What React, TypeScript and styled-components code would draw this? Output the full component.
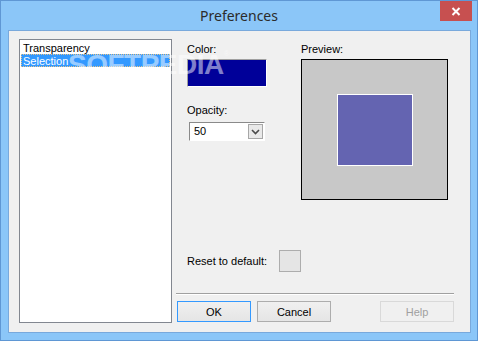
import React from "react";
import styled, { createGlobalStyle } from "styled-components";

const Global = createGlobalStyle`
  html, body { margin: 0; padding: 0; background: #ffffff; }
  body { font-family: "Liberation Sans", Arial, sans-serif; }
  * { box-sizing: border-box; }
`;

const Window = styled.div`
  position: relative;
  width: 478px;
  height: 341px;
  border: 1px solid #5f97d4;
  background: #8bc6f8;
  display: flex;
  flex-direction: column;
`;

const TitleBar = styled.div`
  height: 29px;
  display: grid;
  grid-template-columns: 1fr auto 1fr;
  align-items: start;
`;

const Title = styled.div`
  grid-column: 2;
  font-family: "Noto Sans", "Open Sans", sans-serif;
  font-size: 14px;
  line-height: 20px;
  margin-top: 5px;
  color: #2b2b2b;
`;

const CloseButton = styled.div`
  grid-column: 3;
  justify-self: end;
  width: 32px;
  height: 20px;
  margin-right: 5px;
  background: #c75050;
  display: flex;
  align-items: center;
  justify-content: center;
`;

const Client = styled.div`
  flex: 1;
  margin: 0 6px 7px 7px;
  border: 1px solid #79a9dc;
  background: #f0f0f0;
  display: flex;
  padding: 8px 0 0 10px;
  gap: 4px;
`;

const ListBox = styled.div`
  width: 153px;
  height: 284px;
  border: 1px solid #828790;
  background: #ffffff;
  padding: 1px;
  display: flex;
  flex-direction: column;
`;

const ListItem = styled.div<{ $selected?: boolean }>`
  height: 13px;
  font-size: 11px;
  line-height: 12px;
  padding-left: 1px;
  color: ${(p) => (p.$selected ? "#ffffff" : "#000000")};
  background: ${(p) => (p.$selected ? "#3399ff" : "transparent")};
  border: 1px ${(p) => (p.$selected ? "dotted #e6c48c" : "solid transparent")};
  white-space: nowrap;
`;

const RightPanel = styled.div`
  width: 278px;
  height: 283px;
  display: flex;
  flex-direction: column;
`;

const TopSection = styled.div`
  display: flex;
  padding: 4px 0 0 11px;
`;

const SettingsColumn = styled.div`
  width: 114px;
  display: flex;
  flex-direction: column;
`;

const Label = styled.div<{ $gap?: number }>`
  font-size: 11px;
  line-height: 13px;
  height: 13px;
  color: #000000;
  margin-top: ${(p) => p.$gap ?? 0}px;
  white-space: nowrap;
`;

const Swatch = styled.div`
  margin-top: 3px;
  width: 80px;
  height: 28px;
  background: #000099;
  border-top: 1px solid #a0a0a0;
  border-left: 1px solid #a0a0a0;
  border-bottom: 1px solid #ffffff;
  border-right: 1px solid #ffffff;
`;

const Combo = styled.div`
  margin-top: 5px;
  margin-left: 2px;
  width: 76px;
  height: 19px;
  background: #ffffff;
  border-top: 1px solid #8a8a8a;
  border-left: 1px solid #8a8a8a;
  border-bottom: 1px solid #ffffff;
  border-right: 1px solid #ffffff;
  display: flex;
  align-items: center;
  padding: 1px;
`;

const ComboText = styled.div`
  flex: 1;
  font-size: 11px;
  line-height: 13px;
  padding-left: 3px;
  color: #000;
`;

const ComboButton = styled.div`
  width: 15px;
  height: 15px;
  border: 1px solid #a7a7a7;
  background: #e9e9e9;
  display: flex;
  align-items: center;
  justify-content: center;
`;

const PreviewColumn = styled.div`
  display: flex;
  flex-direction: column;
`;

const PreviewBox = styled.div`
  margin-top: 3px;
  width: 147px;
  height: 141px;
  border: 1px solid #000000;
  background: #c8c8c8;
  display: flex;
  align-items: center;
  justify-content: center;
`;

const PreviewSquare = styled.div`
  width: 76px;
  height: 72px;
  border: 1px solid #ffffff;
  background: #6464b1;
`;

const Spacer = styled.div`
  flex: 1;
`;

const ResetRow = styled.div`
  display: flex;
  align-items: center;
  padding-left: 11px;
  gap: 10px;
`;

const ResetLabel = styled(Label)`
  width: 82px;
`;

const SmallButton = styled.div`
  width: 22px;
  height: 22px;
  border: 1px solid #adadad;
  background: #e5e5e5;
`;

const Separator = styled.div`
  margin-top: 21px;
  height: 2px;
  border-top: 1px solid #a0a0a0;
  border-bottom: 1px solid #ffffff;
`;

const ButtonRow = styled.div`
  display: flex;
  gap: 6px;
  margin-top: 6px;
  padding-left: 1px;
`;

const Button = styled.div<{ $variant?: "default" | "normal" | "disabled" }>`
  width: 74px;
  height: 21px;
  display: flex;
  align-items: center;
  justify-content: center;
  font-size: 11px;
  border: 1px solid
    ${(p) =>
      p.$variant === "default"
        ? "#3399ff"
        : p.$variant === "disabled"
        ? "#d9d9d9"
        : "#adadad"};
  background: ${(p) =>
    p.$variant === "disabled"
      ? "#f0f0f0"
      : "linear-gradient(#f0f0f0, #e5e5e5)"};
  color: ${(p) => (p.$variant === "disabled" ? "#a0a0a0" : "#000000")};
`;

const PushRight = styled.div`
  margin-left: auto;
`;

const Watermark = styled.div`
  position: absolute;
  left: 67px;
  top: 48px;
  font-family: "Liberation Sans", Arial, sans-serif;
  font-weight: bold;
  font-size: 28px;
  letter-spacing: -0.5px;
  color: rgba(255, 255, 255, 0.5);
  pointer-events: none;
  white-space: nowrap;
`;

const Reg = styled.span`
  font-size: 8px;
  vertical-align: top;
  font-weight: normal;
`;

export default function App() {
  return (
    <>
      <Global />
      <Window>
        <TitleBar>
          <Title>Preferences</Title>
          <CloseButton>
            <svg width="10" height="9" viewBox="0 0 10 9">
              <path d="M1.5 1 L8.5 8 M8.5 1 L1.5 8" stroke="#ffffff" strokeWidth="2" />
            </svg>
          </CloseButton>
        </TitleBar>
        <Client>
          <ListBox>
            <ListItem>Transparency</ListItem>
            <ListItem $selected>Selection</ListItem>
          </ListBox>
          <RightPanel>
            <TopSection>
              <SettingsColumn>
                <Label>Color:</Label>
                <Swatch />
                <Label $gap={17}>Opacity:</Label>
                <Combo>
                  <ComboText>50</ComboText>
                  <ComboButton>
                    <svg width="9" height="6" viewBox="0 0 9 6">
                      <path d="M1 1 L4.5 4.5 L8 1" stroke="#4a4a4a" strokeWidth="1.6" fill="none" />
                    </svg>
                  </ComboButton>
                </Combo>
              </SettingsColumn>
              <PreviewColumn>
                <Label>Preview:</Label>
                <PreviewBox>
                  <PreviewSquare />
                </PreviewBox>
              </PreviewColumn>
            </TopSection>
            <Spacer />
            <ResetRow>
              <ResetLabel>Reset to default:</ResetLabel>
              <SmallButton />
            </ResetRow>
            <Separator />
            <ButtonRow>
              <Button $variant="default">OK</Button>
              <Button>Cancel</Button>
              <PushRight>
                <Button $variant="disabled">Help</Button>
              </PushRight>
            </ButtonRow>
          </RightPanel>
        </Client>
        <Watermark>
          SOFTPEDIA<Reg>®</Reg>
        </Watermark>
      </Window>
    </>
  );
}
